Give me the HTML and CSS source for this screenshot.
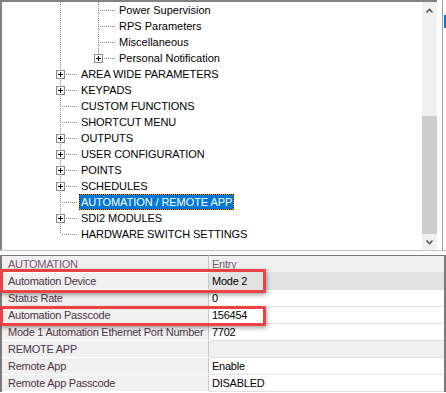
FILE: index.html
```html
<!DOCTYPE html>
<html lang="en">
  <head>
    <meta charset="UTF-8" />
    <title>panel programming</title>
    <link rel="stylesheet" href="styles.css">
  </head>
  <body>
    <div class="top">
      <div class="tree-box">
        <div class="tree">
          <div class="row">
            <div class="pad"></div><div class="guide"></div>
            <div class="conn"></div><span class="label">Power Supervision</span>
          </div>
          <div class="row">
            <div class="pad"></div><div class="guide"></div>
            <div class="conn"></div><span class="label">RPS Parameters</span>
          </div>
          <div class="row">
            <div class="pad"></div><div class="guide"></div>
            <div class="conn"></div><span class="label">Miscellaneous</span>
          </div>
          <div class="row">
            <div class="pad"></div><div class="guide"></div>
            <div class="conn last"><span class="plus"></span></div><span class="label">Personal Notification</span>
          </div>
          <div class="row">
            <div class="pad"></div>
            <div class="conn"><span class="plus"></span></div><span class="label upper">AREA WIDE PARAMETERS</span>
          </div>
          <div class="row">
            <div class="pad"></div>
            <div class="conn"><span class="plus"></span></div><span class="label upper">KEYPADS</span>
          </div>
          <div class="row">
            <div class="pad"></div>
            <div class="conn"></div><span class="label upper">CUSTOM FUNCTIONS</span>
          </div>
          <div class="row">
            <div class="pad"></div>
            <div class="conn"></div><span class="label upper">SHORTCUT MENU</span>
          </div>
          <div class="row">
            <div class="pad"></div>
            <div class="conn"><span class="plus"></span></div><span class="label upper">OUTPUTS</span>
          </div>
          <div class="row">
            <div class="pad"></div>
            <div class="conn"><span class="plus"></span></div><span class="label upper">USER CONFIGURATION</span>
          </div>
          <div class="row">
            <div class="pad"></div>
            <div class="conn"><span class="plus"></span></div><span class="label upper">POINTS</span>
          </div>
          <div class="row">
            <div class="pad"></div>
            <div class="conn"><span class="plus"></span></div><span class="label upper">SCHEDULES</span>
          </div>
          <div class="row">
            <div class="pad"></div>
            <div class="conn"></div><span class="label upper selected">AUTOMATION / REMOTE APP</span>
          </div>
          <div class="row">
            <div class="pad"></div>
            <div class="conn"><span class="plus"></span></div><span class="label upper">SDI2 MODULES</span>
          </div>
          <div class="row">
            <div class="pad"></div>
            <div class="conn last"></div><span class="label upper">HARDWARE SWITCH SETTINGS</span>
          </div>
        </div>
        <div class="vscroll">
          <div class="arrow">
            <svg width="7" height="5" viewBox="0 0 7 5"><path d="M0.5 4.5 L3.5 1.5 L6.5 4.5" fill="none" stroke="#606060" stroke-width="1.6"/></svg>
          </div>
          <div class="track"><div class="thumb"></div></div>
          <div class="arrow">
            <svg width="7" height="5" viewBox="0 0 7 5"><path d="M0.5 0.5 L3.5 3.5 L6.5 0.5" fill="none" stroke="#606060" stroke-width="1.6"/></svg>
          </div>
        </div>
      </div>
      <div class="side"><div class="side-tab"></div></div>
    </div>

    <div class="props-wrap">
      <table class="props">
        <tr class="head">
          <td class="name">AUTOMATION</td>
          <td class="value">Entry</td>
        </tr>
        <tr class="current">
          <td class="name">Automation Device</td>
          <td class="value">Mode 2</td>
        </tr>
        <tr>
          <td class="name">Status Rate</td>
          <td class="value">0</td>
        </tr>
        <tr>
          <td class="name">Automation Passcode</td>
          <td class="value">156454</td>
        </tr>
        <tr>
          <td class="name">Mode 1 Automation Ethernet Port Number</td>
          <td class="value">7702</td>
        </tr>
        <tr class="group">
          <td class="name">REMOTE APP</td>
          <td class="value"></td>
        </tr>
        <tr>
          <td class="name">Remote App</td>
          <td class="value">Enable</td>
        </tr>
        <tr>
          <td class="name">Remote App Passcode</td>
          <td class="value">DISABLED</td>
        </tr>
      </table>
      <div class="mark mark-device"></div>
      <div class="mark mark-passcode"></div>
    </div>
  </body>
</html>
```

FILE: styles.css
```css
body {
  margin: 0;
  padding: 0;
  width: 446px;
  height: 393px;
  background-color: #fff;
  font-family: "Liberation Sans", Arial, sans-serif;
  overflow: hidden;
}

.top {
  display: flex;
  height: 250px;
  border-bottom: 1px solid #c4c4c4;
}

.tree-box {
  display: flex;
  width: 435px;
  border-top: 2px solid #828282;
  border-left: 2px solid #828282;
}

.tree {
  flex: 1;
  font-size: 11px;
  color: #000;
}

.row {
  display: flex;
  height: 16px;
}

.pad {
  width: 58px;
  flex: none;
}

.guide {
  width: 38px;
  flex: none;
  background-image: linear-gradient(to bottom, #8a8a8a 50%, transparent 50%);
  background-size: 1px 2px;
  background-repeat: repeat-y;
}

.conn {
  position: relative;
  width: 19px;
  flex: none;
}

.conn::before {
  content: "";
  position: absolute;
  left: 0;
  top: 0;
  width: 1px;
  height: 16px;
  background-image: linear-gradient(to bottom, #8a8a8a 50%, transparent 50%);
  background-size: 1px 2px;
}

.conn.last::before {
  height: 8px;
}

.conn::after {
  content: "";
  position: absolute;
  left: 1px;
  top: 8px;
  width: 17px;
  height: 1px;
  background-image: linear-gradient(to right, transparent 50%, #8a8a8a 50%);
  background-size: 2px 1px;
}

.plus {
  position: absolute;
  left: -4px;
  top: 4px;
  width: 7px;
  height: 7px;
  border: 1px solid #8a8a8a;
  background-color: #fff;
  z-index: 1;
}

.plus::before {
  content: "";
  position: absolute;
  left: 1px;
  top: 3px;
  width: 5px;
  height: 1px;
  background-color: #000;
}

.plus::after {
  content: "";
  position: absolute;
  left: 3px;
  top: 1px;
  width: 1px;
  height: 5px;
  background-color: #000;
}

.label {
  padding: 0 2px;
  line-height: 16px;
  white-space: nowrap;
}

.upper {
  letter-spacing: -0.08px;
}

.selected {
  background-color: #0078d7;
  color: #fff;
  outline: 1px dotted #111;
  outline-offset: -1px;
  box-shadow: inset 0 0 0 1px #e8982e;
}

.vscroll {
  display: flex;
  flex-direction: column;
  width: 15px;
  background-color: #f0f0f0;
}

.arrow {
  height: 16px;
  display: flex;
  justify-content: center;
  align-items: center;
}

.track {
  flex: 1;
  display: flex;
  flex-direction: column;
  justify-content: flex-end;
}

.thumb {
  height: 118px;
  background-color: #cdcdcd;
}

.side {
  flex: 1;
  padding-left: 5px;
}

.side-tab {
  height: 100%;
  border-left: 1px solid #a0a0a0;
  position: relative;
}

.side-tab::after {
  content: "";
  position: absolute;
  left: 1px;
  top: 15px;
  width: 2px;
  height: 13px;
  background-color: #0078d7;
}

.props-wrap {
  position: relative;
  margin-top: 4px;
}

.props {
  width: 446px;
  border-collapse: collapse;
  border-top: 1px solid #7a7a7a;
  border-left: 2px solid #7a7a7a;
  border-right: 2px solid #7a7a7a;
  border-bottom: 1px solid #7a7a7a;
  font-size: 11px;
  letter-spacing: -0.25px;
  table-layout: fixed;
}

.props td {
  height: 16px;
  padding: 0 0 0 6px;
  border-bottom: 1px solid #e2e2e2;
  white-space: nowrap;
  overflow: hidden;
  line-height: 16px;
}

.props .name {
  width: 200px;
  background-color: #f0f0f0;
  color: #4e3546;
  border-right: 1px solid #c8c8c8;
  border-bottom-color: #fff;
}

.props .value {
  color: #000;
  padding-left: 3px;
}

.props .head td {
  color: #7a5670;
  background-color: #f0f0f0;
}

.props .current .value {
  background-color: #e3e3e3;
}

.props .group .value {
  background-color: #f0f0f0;
}

.mark {
  position: absolute;
  left: 0;
  width: 260px;
  border: 3px solid #ec4145;
  border-radius: 1px;
  box-shadow: 1px 2px 4px rgba(0, 0, 0, 0.35);
}

.mark-device {
  top: 14px;
  height: 18px;
}

.mark-passcode {
  top: 51px;
  height: 14px;
}
```
